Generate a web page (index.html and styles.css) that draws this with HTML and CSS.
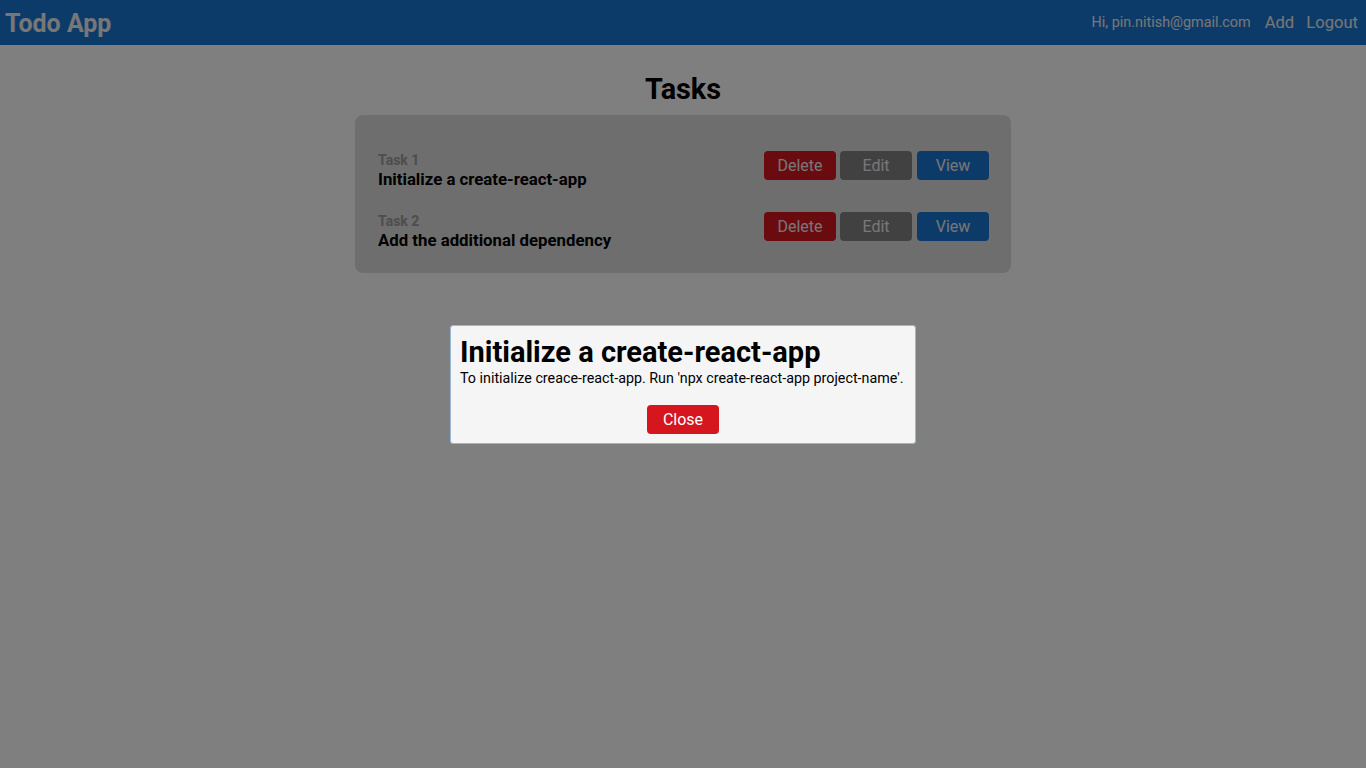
FILE: index.html
```html
<!DOCTYPE html>
<html>
<head>
<meta charset="utf-8">
<title>Todo App</title>
<link rel="stylesheet" href="styles.css">
</head>
<body>
<header class="navbar">
  <div class="brand">Todo App</div>
  <nav class="nav-right">
    <span class="greet">Hi, pin.nitish@gmail.com</span>
    <a class="nav-link">Add</a>
    <a class="nav-link">Logout</a>
  </nav>
</header>
<main class="content">
  <h1 class="page-title">Tasks</h1>
  <section class="card">
    <div class="task-row">
      <div class="task-info">
        <div class="task-label">Task 1</div>
        <div class="task-title">Initialize a create-react-app</div>
      </div>
      <div class="actions">
        <button class="btn btn-red">Delete</button>
        <button class="btn btn-gray">Edit</button>
        <button class="btn btn-blue">View</button>
      </div>
    </div>
    <div class="task-row">
      <div class="task-info">
        <div class="task-label">Task 2</div>
        <div class="task-title">Add the additional dependency</div>
      </div>
      <div class="actions">
        <button class="btn btn-red">Delete</button>
        <button class="btn btn-gray">Edit</button>
        <button class="btn btn-blue">View</button>
      </div>
    </div>
  </section>
</main>
<div class="overlay"></div>
<div class="modal">
  <h2 class="modal-title">Initialize a create-react-app</h2>
  <p class="modal-text">To initialize creace-react-app. Run 'npx create-react-app project-name'.</p>
  <div class="modal-foot">
    <button class="btn btn-red btn-close">Close</button>
  </div>
</div>
</body>
</html>
```
FILE: styles.css
```css
* { box-sizing: border-box; }
html, body { margin: 0; padding: 0; }
body {
  font-family: Roboto, "Liberation Sans", Arial, sans-serif;
  background: #ffffff;
  color: #000;
  height: 768px;
  overflow: hidden;
}
.navbar {
  height: 45px;
  background: #1976d2;
  display: flex;
  align-items: center;
  justify-content: space-between;
  padding: 0 8px 0 5px;
}
.brand {
  font-size: 25px;
  font-weight: 700;
  color: #efefef;
  margin-top: 1px;
}
.nav-right {
  display: flex;
  align-items: center;
}
.greet {
  font-size: 14.4px;
  color: #efefef;
  margin-right: 14px;
}
.nav-link {
  font-size: 16.6px;
  color: #efefef;
  margin-right: 12px;
}
.nav-link:last-child { margin-right: 0; }
.content {
  display: flex;
  flex-direction: column;
  align-items: center;
}
.page-title {
  font-size: 28.8px;
  font-weight: 700;
  margin: 27px 0 9px;
  line-height: 34px;
}
.card {
  width: 656px;
  background: #dcdcdc;
  border-radius: 8px;
  padding: 36px 22px 23px 23px;
  display: flex;
  flex-direction: column;
  gap: 23px;
}
.task-row {
  display: flex;
  justify-content: space-between;
  align-items: flex-start;
}
.task-label {
  font-size: 14px;
  font-weight: 700;
  color: #9a9a9a;
  line-height: 18px;
}
.task-title {
  font-size: 16.8px;
  font-weight: 700;
  line-height: 20px;
}
.actions {
  display: flex;
  gap: 4px;
}
.btn {
  font-family: Roboto, "Liberation Sans", Arial, sans-serif;
  font-size: 16px;
  color: #eeeeee;
  border: none;
  border-radius: 4px;
  width: 72px;
  height: 29px;
  padding: 0;
  cursor: pointer;
}
.btn-red { background: #d5161f; }
.btn-gray { background: #838383; }
.btn-blue { background: #1976d2; }
.actions .btn-blue { margin-left: 1px; }
.overlay {
  position: fixed;
  inset: 0;
  background: rgba(0, 0, 0, 0.5);
}
.modal {
  position: fixed;
  left: 450px;
  top: 325px;
  width: 466px;
  background: #f5f5f5;
  border: 1px solid #9ab8d4;
  border-radius: 3px;
  padding: 9px 9px 9px 9px;
}
.modal-title {
  font-size: 29px;
  font-weight: 700;
  margin: 0;
  line-height: 34px;
}
.modal-text {
  font-size: 14.3px;
  margin: 0;
  line-height: 18px;
  white-space: nowrap;
}
.modal-foot {
  display: flex;
  justify-content: center;
  margin-top: 18px;
}
.btn-close {
  color: #ffffff;
  height: 29px;
}
```
